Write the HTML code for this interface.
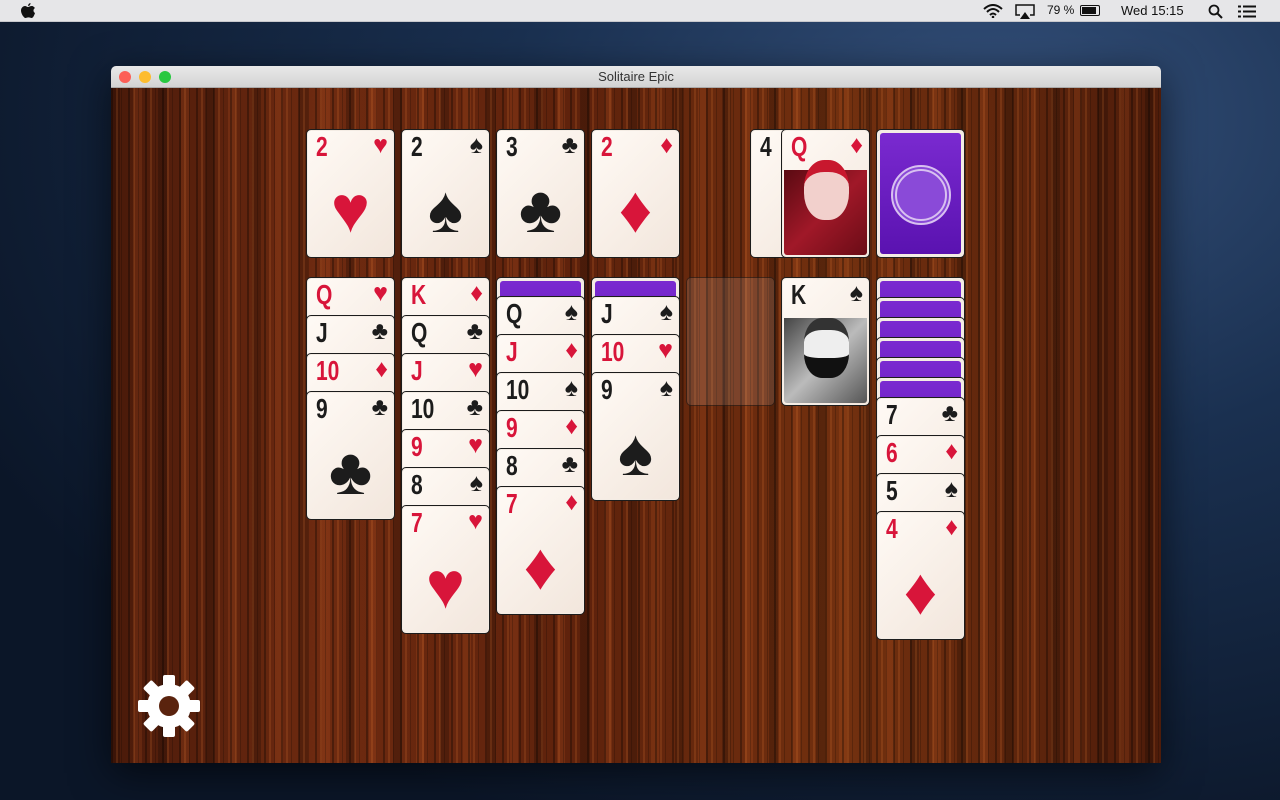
<!DOCTYPE html>
<html><head><meta charset="utf-8"><style>
*{margin:0;padding:0;box-sizing:border-box}
body{width:1280px;height:800px;overflow:hidden;position:relative;font-family:"Liberation Sans",sans-serif;
background:radial-gradient(ellipse at 78% 15%,#34507a 0%,#1a3050 35%,#0b1628 80%);}
.menu{position:absolute;left:0;top:0;width:1280px;height:22px;background:#e6e6e8;border-bottom:1px solid #c8c8cc;font-size:13px;color:#111}
.win{position:absolute;left:111px;top:66px;width:1050px;height:697px;box-shadow:0 10px 40px rgba(0,0,0,.6);border-radius:5px 5px 0 0;overflow:hidden}
.title{height:22px;background:linear-gradient(#e9e9e9,#d3d3d3);text-align:center;font-size:13px;line-height:22px;color:#333;border-bottom:1px solid #aaa;position:relative}
.dot{position:absolute;top:5px;width:12px;height:12px;border-radius:50%}
.wood{position:absolute;top:22px;left:0;width:1050px;height:675px;
background:
repeating-linear-gradient(90deg,rgba(0,0,0,.3) 0 2px,transparent 2px 5px,rgba(255,140,60,.15) 5px 7px,transparent 7px 10px,rgba(0,0,0,.2) 10px 11px,transparent 11px 17px),
repeating-linear-gradient(90deg,rgba(0,0,0,.22) 0 9px,transparent 9px 23px,rgba(255,120,50,.12) 23px 31px,transparent 31px 47px),
linear-gradient(90deg,#4a1a0a,#6e2a10 20%,#5e220c 45%,#72300f 70%,#4e1c0a);}
.c{position:absolute;width:89px;height:129px;background:linear-gradient(135deg,#fffaf5,#f2e6dc);border:1.5px solid #1c1c1c;border-radius:5px;box-shadow:0 0 0 1px #f4ece4 inset}
.r{position:absolute;left:9px;top:1px;font-family:"Liberation Sans",sans-serif;font-weight:bold;font-size:28px;transform:scaleX(.75);transform-origin:left}
.s{position:absolute;right:6px;top:1px;font-size:25px}
.big{position:absolute;left:0;right:0;top:34px;text-align:center;font-size:66px;line-height:90px}
.red{color:#d8153a}.blk{color:#1c1c1c}
.b{position:absolute;width:89px;height:129px;border:1.5px solid #1c1c1c;border-radius:5px;background:linear-gradient(#f4ece4,#f4ece4);padding:3px}
.b div{width:100%;height:100%;border-radius:3px;background:linear-gradient(#7a2ad0,#5a12b0)}
</style></head><body>
<div class="menu">
<svg style="position:absolute;left:21px;top:3px" width="14" height="16" viewBox="0 0 14 16"><path d="M7 4C8 4 9 3 11 3c1 0 2 1 3 2-2 1-2 4 0 5-1 3-2 5-3.5 5-1 0-1.5-.6-3-.6S5.5 15 4.5 15C3 15 0 11 0 7.5 0 5 2 3 4 3c1.2 0 2 1 3 1zM7 3C7 1.5 8 .3 9.5 0 9.6 1.5 8.6 3 7 3z" fill="#111"/></svg>
<svg style="position:absolute;left:983px;top:4px" width="20" height="14" viewBox="0 0 20 14"><path d="M1 5Q10-3 19 5M4 8Q10 2 16 8M7 11Q10 8 13 11" stroke="#111" stroke-width="2" fill="none"/><circle cx="10" cy="13" r="1.3" fill="#111"/></svg>
<svg style="position:absolute;left:1015px;top:4px" width="20" height="15" viewBox="0 0 20 15"><path d="M5 11H1V1h18v10h-4" stroke="#111" stroke-width="1.5" fill="none"/><path d="M10 8l5 7H5z" fill="#111"/></svg>
<span style="position:absolute;left:1047px;top:3px;font-size:12px">79 %</span>
<span style="position:absolute;left:1080px;top:5px;width:20px;height:11px;border:1.5px solid #111;border-radius:2px;padding:1px"><span style="display:block;width:14px;height:100%;background:#111"></span></span>
<span style="position:absolute;left:1121px;top:3px">Wed 15:15</span>
<svg style="position:absolute;left:1208px;top:4px" width="15" height="15" viewBox="0 0 15 15"><circle cx="6" cy="6" r="4.5" stroke="#111" stroke-width="1.8" fill="none"/><path d="M9.5 9.5L14 14" stroke="#111" stroke-width="2"/></svg>
<svg style="position:absolute;left:1238px;top:5px" width="18" height="13" viewBox="0 0 18 13"><path d="M0 1.5h3M5 1.5h13M0 6.5h3M5 6.5h13M0 11.5h3M5 11.5h13" stroke="#111" stroke-width="2"/></svg>
</div>
<div class="win">
<div class="title"><span class="dot" style="left:8px;background:#fc5f57"></span><span class="dot" style="left:28px;background:#fdbc2e"></span><span class="dot" style="left:48px;background:#28c840"></span>Solitaire Epic</div>
<div class="wood">
<div class="c" style="left:195px;top:41px"><span class="r red">2</span><span class="s red">♥</span><div class="big red">♥</div></div>
<div class="c" style="left:290px;top:41px"><span class="r blk">2</span><span class="s blk">♠</span><div class="big blk">♠</div></div>
<div class="c" style="left:385px;top:41px"><span class="r blk">3</span><span class="s blk">♣</span><div class="big blk">♣</div></div>
<div class="c" style="left:480px;top:41px"><span class="r red">2</span><span class="s red">♦</span><div class="big red">♦</div></div>
<div class="c" style="left:639px;top:41px"><span class="r blk">4</span><span class="s blk">♠</span></div>
<div class="c" style="left:670px;top:41px"><span class="r red">Q</span><span class="s red">♦</span><div style="position:absolute;left:2px;right:2px;top:40px;bottom:2px;background:linear-gradient(135deg,#5a0a12,#a01828 50%,#6a0c16);border-radius:0 0 3px 3px"></div><div style="position:absolute;left:22px;top:30px;width:45px;height:60px;border-radius:45%;background:#f2d0cc;border-top:12px solid #c8182e"></div></div>
<div class="b" style="left:765px;top:41px"><div style="position:relative"><span style="position:absolute;left:11px;top:32px;width:60px;height:60px;border-radius:50%;border:6px double #d8c0f0;background:#8a4ad8"></span></div></div>

<div class="c" style="left:195px;top:189px"><span class="r red">Q</span><span class="s red">♥</span></div>
<div class="c" style="left:195px;top:227px"><span class="r blk">J</span><span class="s blk">♣</span></div>
<div class="c" style="left:195px;top:265px"><span class="r red">10</span><span class="s red">♦</span></div>
<div class="c" style="left:195px;top:303px"><span class="r blk">9</span><span class="s blk">♣</span><div class="big blk">♣</div></div>

<div class="c" style="left:290px;top:189px"><span class="r red">K</span><span class="s red">♦</span></div>
<div class="c" style="left:290px;top:227px"><span class="r blk">Q</span><span class="s blk">♣</span></div>
<div class="c" style="left:290px;top:265px"><span class="r red">J</span><span class="s red">♥</span></div>
<div class="c" style="left:290px;top:303px"><span class="r blk">10</span><span class="s blk">♣</span></div>
<div class="c" style="left:290px;top:341px"><span class="r red">9</span><span class="s red">♥</span></div>
<div class="c" style="left:290px;top:379px"><span class="r blk">8</span><span class="s blk">♠</span></div>
<div class="c" style="left:290px;top:417px"><span class="r red">7</span><span class="s red">♥</span><div class="big red">♥</div></div>

<div class="b" style="left:385px;top:189px"><div></div></div>
<div class="c" style="left:385px;top:208px"><span class="r blk">Q</span><span class="s blk">♠</span></div>
<div class="c" style="left:385px;top:246px"><span class="r red">J</span><span class="s red">♦</span></div>
<div class="c" style="left:385px;top:284px"><span class="r blk">10</span><span class="s blk">♠</span></div>
<div class="c" style="left:385px;top:322px"><span class="r red">9</span><span class="s red">♦</span></div>
<div class="c" style="left:385px;top:360px"><span class="r blk">8</span><span class="s blk">♣</span></div>
<div class="c" style="left:385px;top:398px"><span class="r red">7</span><span class="s red">♦</span><div class="big red">♦</div></div>

<div class="b" style="left:480px;top:189px"><div></div></div>
<div class="c" style="left:480px;top:208px"><span class="r blk">J</span><span class="s blk">♠</span></div>
<div class="c" style="left:480px;top:246px"><span class="r red">10</span><span class="s red">♥</span></div>
<div class="c" style="left:480px;top:284px"><span class="r blk">9</span><span class="s blk">♠</span><div class="big blk">♠</div></div>

<div style="position:absolute;left:575px;top:189px;width:89px;height:129px;border:1px solid rgba(0,0,0,.5);border-radius:5px;background:rgba(255,255,255,.12)"></div>

<div class="c" style="left:670px;top:189px"><span class="r blk">K</span><span class="s blk">♠</span><div style="position:absolute;left:2px;right:2px;top:40px;bottom:2px;background:linear-gradient(135deg,#444,#bbb 50%,#555);border-radius:0 0 3px 3px"></div><div style="position:absolute;left:22px;top:40px;width:45px;height:60px;border-radius:40%;background:#eee;border-top:12px solid #333;border-bottom:20px solid #111"></div></div>

<div class="b" style="left:765px;top:189px"><div></div></div>
<div class="b" style="left:765px;top:209px"><div></div></div>
<div class="b" style="left:765px;top:229px"><div></div></div>
<div class="b" style="left:765px;top:249px"><div></div></div>
<div class="b" style="left:765px;top:269px"><div></div></div>
<div class="b" style="left:765px;top:289px"><div></div></div>
<div class="c" style="left:765px;top:309px"><span class="r blk">7</span><span class="s blk">♣</span></div>
<div class="c" style="left:765px;top:347px"><span class="r red">6</span><span class="s red">♦</span></div>
<div class="c" style="left:765px;top:385px"><span class="r blk">5</span><span class="s blk">♠</span></div>
<div class="c" style="left:765px;top:423px"><span class="r red">4</span><span class="s red">♦</span><div class="big red">♦</div></div>

<svg style="position:absolute;left:26px;top:586px" width="64" height="64" viewBox="0 0 64 64">
<g fill="#fff" transform="translate(32 32)">
<circle r="22"/>
<g id="t"><rect x="-6" y="-31" width="12" height="14" rx="2"/></g>
<use href="#t" transform="rotate(45)"/><use href="#t" transform="rotate(90)"/><use href="#t" transform="rotate(135)"/><use href="#t" transform="rotate(180)"/><use href="#t" transform="rotate(225)"/><use href="#t" transform="rotate(270)"/><use href="#t" transform="rotate(315)"/>
</g>
<circle cx="32" cy="32" r="10" fill="#5a230e"/>
</svg>
</div></div>
</body></html>
